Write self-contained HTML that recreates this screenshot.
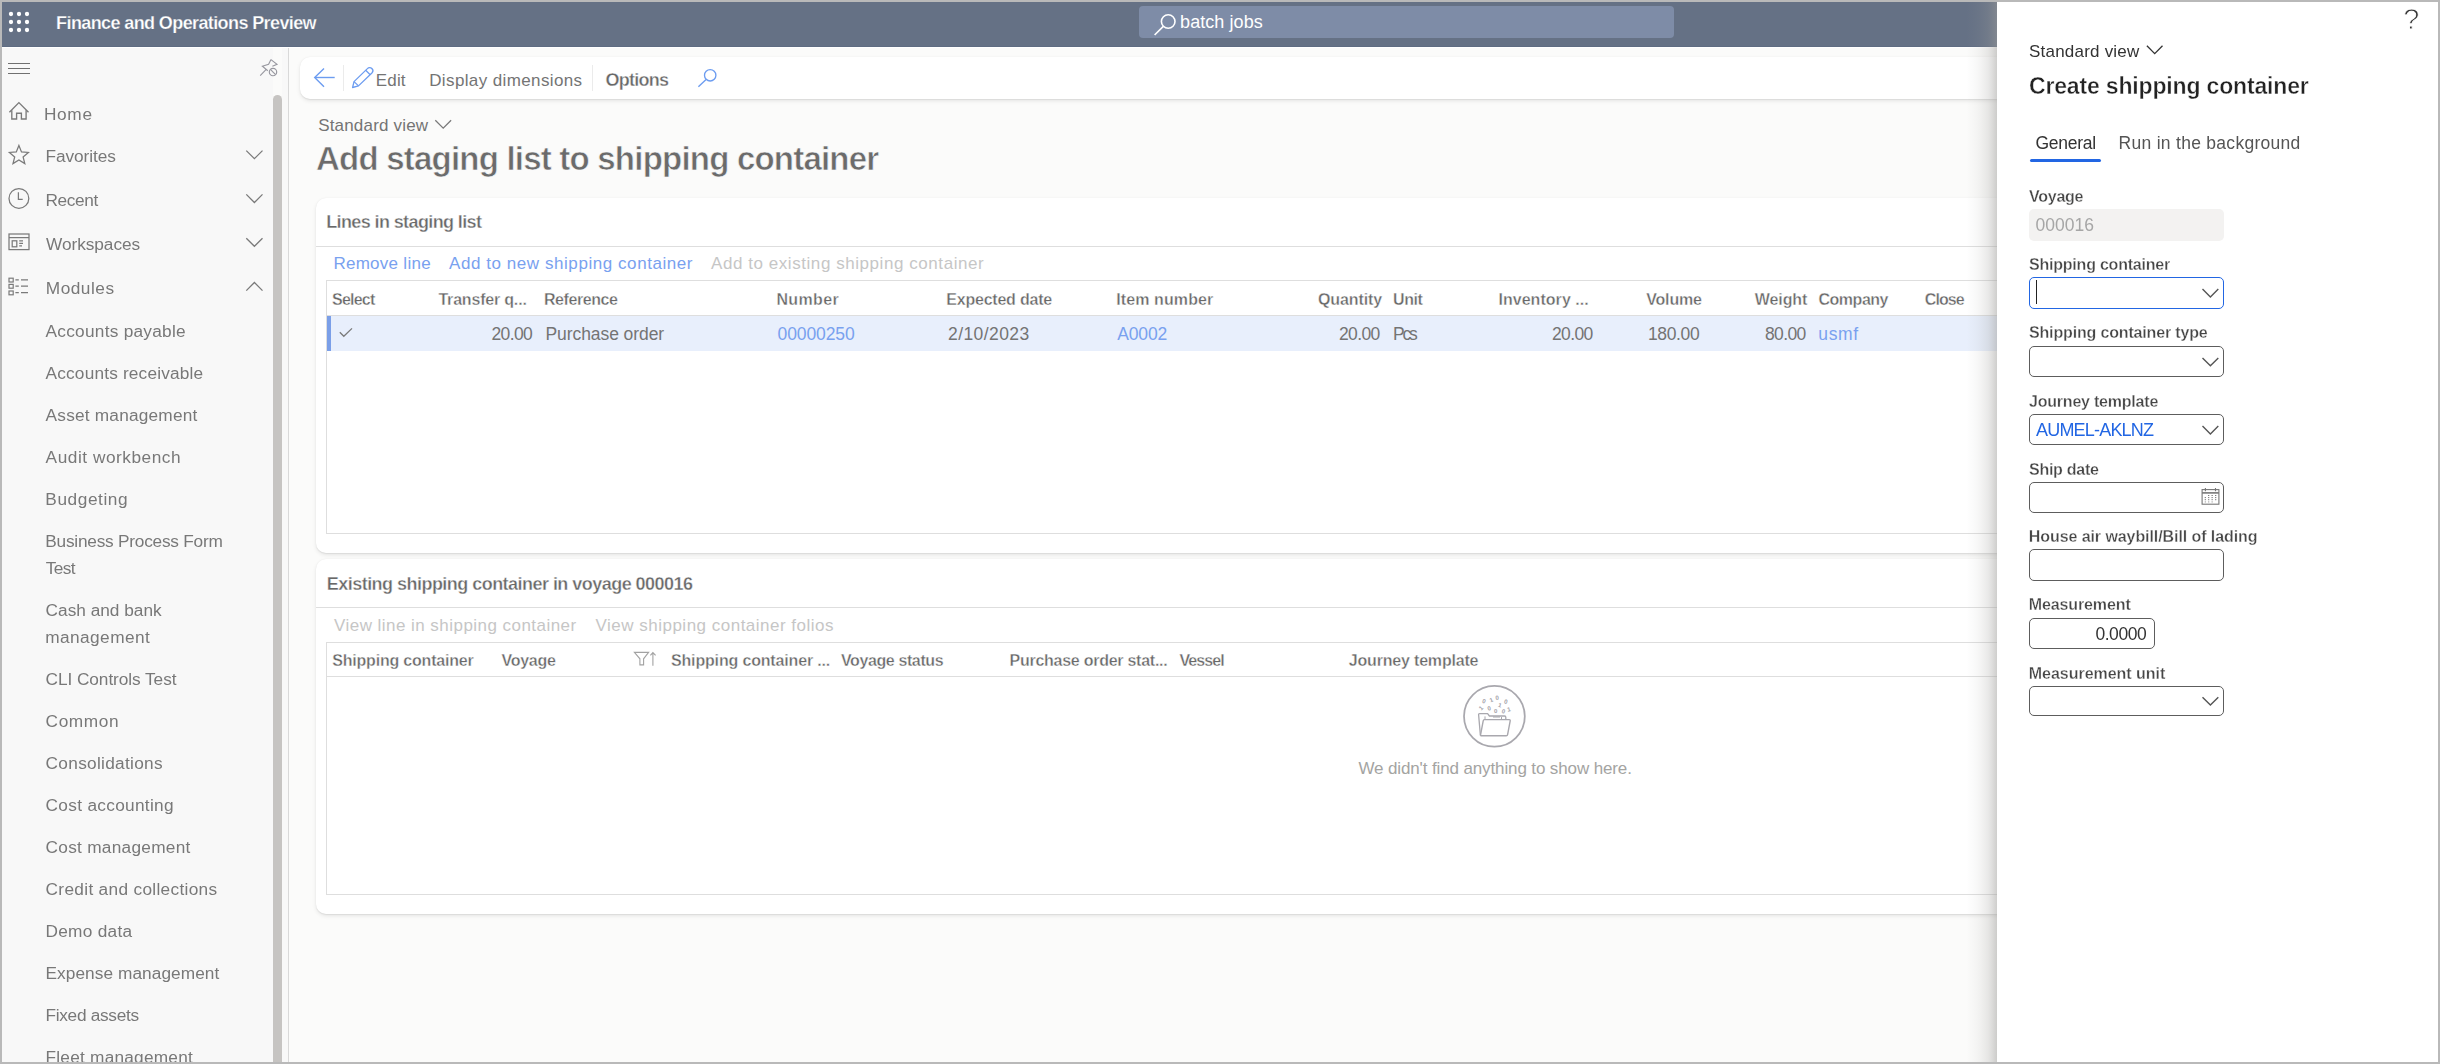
<!DOCTYPE html>
<html lang="en">
<head>
<meta charset="utf-8">
<title>Add staging list to shipping container</title>
<style>
*{box-sizing:border-box;margin:0;padding:0}
html,body{width:2440px;height:1064px;overflow:hidden;background:#b9b9b9;font-family:"Liberation Sans",sans-serif}
#app{position:absolute;left:2px;top:2px;width:2436px;height:1060px;overflow:hidden;background:#fbfbfa}
.abs{position:absolute}
.t{position:absolute;white-space:pre;line-height:1;display:block}
.layer{position:absolute;left:0;top:0;width:2440px;height:1064px;display:block}
.gl{will-change:transform}
#root{position:absolute;left:0;top:0;width:2440px;height:1064px}
/* header */
#hdr{left:2px;top:2px;width:2436px;height:45px;background:#657185}
#hdr2{left:2px;top:46px;width:2436px;height:1px;background:#5f6c82}
#hdr3{left:2px;top:47px;width:2436px;height:1px;background:#fff}
#srch{left:1139px;top:6px;width:535px;height:32px;background:#7e8ca7;border-radius:4px}
/* sidebar */
#side{left:2px;top:47px;width:271px;height:1015px;background:#f8f8f8}
#sbar{left:273px;top:95px;width:9px;height:980px;background:#c6c4c2;border-radius:5px 5px 0 0}
#sgap{left:282px;top:47px;width:6px;height:1015px;background:#f8f8f8}
#sline{left:288px;top:47px;width:1px;height:1015px;background:#d9d9d9}
/* main */
.card{background:#fff;border-radius:10px;box-shadow:0 2px 4.5px rgba(0,0,0,.085),0 .4px 1.2px rgba(0,0,0,.07)}
#abar{left:300px;top:57px;width:2200px;height:42px}
#card1{left:316px;top:198px;width:2200px;height:355px}
#card2{left:316px;top:559px;width:2200px;height:355px}
.hl{background:#dedede;height:1px}
.grid{border:1px solid #dedede;background:#fff}
#g1{left:326px;top:280px;width:2200px;height:254px}
#g2{left:326px;top:642px;width:2200px;height:253px}
#row{left:327px;top:316px;width:2200px;height:35px;background:#e8effc}
#rowbar{left:327px;top:316px;width:4px;height:35px;background:#7b9fe8}
/* dialog */
#dshadow{left:1967px;top:2px;width:30px;height:1060px;background:linear-gradient(to right,rgba(158,157,154,0) 0%,rgba(158,157,154,0.02) 7%,rgba(158,157,154,0.045) 20%,rgba(158,157,154,0.075) 33%,rgba(158,157,154,0.115) 45%,rgba(158,157,154,0.165) 57%,rgba(158,157,154,0.225) 70%,rgba(158,157,154,0.32) 82%,rgba(158,157,154,0.44) 94%,rgba(158,157,154,0.5) 100%)}
#dlg{left:1997px;top:2px;width:441px;height:1060px;background:#fff}
.inp{left:2029px;width:195px;height:32px;border:1px solid #5d5d5d;border-radius:5px;background:#fff}
#tabul{left:2030px;top:158.5px;width:71px;height:3px;background:#2266e3;border-radius:1.5px}
</style>
</head>
<body>
<div id="root">
<div id="app" class="abs" style="left:2px;top:2px"></div>
<div id="hdr" class="abs"></div><div id="hdr2" class="abs"></div>
<div id="srch" class="abs"></div>
<div id="side" class="abs"></div>
<div id="sbar" class="abs"></div>
<div id="sgap" class="abs"></div>
<div id="sline" class="abs"></div>
<div id="hdr3" class="abs"></div>

<div id="abar" class="abs card"></div>
<div class="abs" style="left:343px;top:65px;width:1px;height:26px;background:#ebebeb"></div>
<div class="abs" style="left:592px;top:65px;width:1px;height:26px;background:#ebebeb"></div>

<div id="card1" class="abs card"></div>
<div class="abs hl" style="left:316px;top:246px;width:2200px"></div>
<div id="g1" class="abs grid"></div>
<div class="abs hl" style="left:327px;top:315px;width:2200px"></div>
<div id="row" class="abs"></div><div id="rowbar" class="abs"></div>

<div id="card2" class="abs card"></div>
<div class="abs hl" style="left:316px;top:607px;width:2200px"></div>
<div id="g2" class="abs grid"></div>
<div class="abs hl" style="left:327px;top:676px;width:2200px"></div>

<div id="dshadow" class="abs"></div>
<div id="dlg" class="abs"></div>
<div id="tabul" class="abs"></div>
<div class="abs" style="left:2029px;top:209px;width:195px;height:32px;background:#f3f2f1;border-radius:5px"></div>
<div class="abs inp" style="top:277px;border:1.5px solid #2266e3"></div>
<div class="abs" style="left:2036px;top:280px;width:1px;height:24px;background:#222"></div>
<div class="abs inp" style="top:346px;height:31px"></div>
<div class="abs inp" style="top:414px;height:31px"></div>
<div class="abs inp" style="top:482px;height:31px"></div>
<div class="abs inp" style="top:549px"></div>
<div class="abs inp" style="top:618px;width:126px;height:31px"></div>
<div class="abs inp" style="top:686px;height:30px"></div>

<svg class="abs" style="left:0;top:0" width="2440" height="1064" viewBox="0 0 2440 1064" fill="none" stroke-linecap="butt" stroke-linejoin="miter">
<!-- waffle -->
<g fill="#fff" stroke="none">
<circle cx="11" cy="14" r="2.15"/><circle cx="19" cy="14" r="2.15"/><circle cx="27" cy="14" r="2.15"/>
<circle cx="11" cy="22" r="2.15"/><circle cx="19" cy="22" r="2.15"/><circle cx="27" cy="22" r="2.15"/>
<circle cx="11" cy="30" r="2.15"/><circle cx="19" cy="30" r="2.15"/><circle cx="27" cy="30" r="2.15"/>
</g>
<!-- header search icon -->
<g stroke="#fff" stroke-width="1.6"><circle cx="1168.2" cy="21.5" r="6.8"/><path d="M1163.3 26.4 L1154.6 35"/></g>
<!-- hamburger -->
<g stroke="#707070" stroke-width="1.2"><path d="M8 63.5H30M8 68.5H30M8 73.5H30"/></g>
<!-- pin -->
<g stroke="#9898a0" stroke-width="1.15"><path d="M271 59.6 L277 64.4 L272.4 66.3 M271 59.6 L268.6 64.2 L262.4 66.2 L267.8 70.8 M266.2 69.4 L260.2 75.6"/><circle cx="273" cy="72" r="3.7"/><path d="M270.4 69.4 L275.6 74.6"/></g>
<!-- home -->
<g stroke="#7a7a7a" stroke-width="1.35"><path d="M9.4 112.2 L18.9 102.6 L28.5 112.2"/><path d="M11.8 110.2 V119 H16.6 V113.2 H21.4 V119 H26.1 V110.2"/></g>
<!-- star -->
<path stroke="#7a7a7a" stroke-width="1.25" d="M18.9 145.5 L21.5 151.9 L28.4 152.4 L23.1 156.9 L24.8 163.6 L18.9 159.9 L13.0 163.6 L14.7 156.9 L9.4 152.4 L16.3 151.9 Z"/>
<!-- clock -->
<g stroke="#7a7a7a" stroke-width="1.25"><circle cx="18.9" cy="198.4" r="9.9"/><path d="M18.4 192.2 V199.4 H22.7"/></g>
<!-- workspaces -->
<g stroke="#7a7a7a" stroke-width="1.25"><rect x="9" y="234" width="20" height="15.6"/><path d="M9 237.6H29"/><rect x="12.2" y="240.8" width="4.6" height="6"/><path d="M19.2 240.8H23M19.2 243.3H23M19.2 245.8H22"/></g>
<!-- modules -->
<g stroke="#7a7a7a" stroke-width="1.2"><rect x="9" y="278.2" width="4.2" height="3.8"/><rect x="9" y="284.4" width="4.2" height="3.8"/><rect x="9" y="291" width="4.2" height="3.8"/>
<path d="M15.4 279.8H18.8M21 279.8H28M15.4 286.2H18.8M21 286.2H28M15.4 292.7H18.8M21 292.7H28"/></g>
<!-- sidebar chevrons -->
<g stroke="#7a7a7a" stroke-width="1.3"><path d="M246.3 150.6 L254.4 158.7 L262.5 150.6"/><path d="M246.3 194.4 L254.4 202.5 L262.5 194.4"/><path d="M246.3 238.2 L254.4 246.3 L262.5 238.2"/><path d="M246.3 290.6 L254.4 282.5 L262.5 290.6"/></g>
<!-- back arrow -->
<g stroke="#6c9cf0" stroke-width="1.4"><path d="M334.7 77.5 H315"/><path d="M324 68.4 L314.7 77.5 L324 86.7"/></g>
<!-- pencil -->
<g stroke="#6c9cf0" stroke-width="1.3" stroke-linejoin="round"><path d="M352.6 87.5 L354 81.6 L367.4 68.6 A3.1 3.1 0 0 1 371.9 73 L358.5 85.9 Z"/><path d="M354 81.6 L358.5 85.9"/><path d="M365.7 70.3 L370.2 74.7"/></g>
<!-- action search -->
<g stroke="#6c9cf0" stroke-width="1.35"><circle cx="710.2" cy="75.3" r="5.7"/><path d="M706.1 79.4 L698.4 86.8"/></g>
<!-- standard view chevron (main) -->
<path stroke="#7a7a7a" stroke-width="1.3" d="M435.3 120.3 L443.2 128.2 L451.1 120.3"/>
<!-- row check -->
<path stroke="#7a7a7a" stroke-width="1.3" d="M339.8 332.3 L343.8 336.3 L352 328.4"/>
<!-- filter + sort arrow -->
<g stroke="#a2a2a2" stroke-width="1.1"><path d="M634.4 652.4 H648.6 L643.6 658.8 V664.9 H639.9 V658.8 Z"/><path d="M652.9 652.4 V665.8 M650.4 655.4 L652.9 652.6 L655.6 655.4"/></g>
<!-- empty state -->
<g stroke="#a9a8ae" stroke-width="1.5" stroke-linejoin="round"><circle cx="1494.4" cy="716.3" r="30.4" stroke-width="1.75"/>
<path stroke-width="1.3" d="M1480.4 735.4 L1478.6 714.6 Q1478.5 713.6 1479.6 713.6 H1487.6 L1489.4 716 H1504.6 Q1505.8 716 1505.8 717.2 V719.4"/>
<path stroke-width="1.4" d="M1484.4 719.6 H1509.2 Q1510.4 719.6 1510.2 720.8 L1507.6 734.6 Q1507.4 735.8 1506.2 735.8 H1481.6 Q1480.4 735.8 1480.6 734.6 L1483.2 720.8 Q1483.4 719.6 1484.4 719.6 Z"/>
<path stroke-width="1" d="M1485 716.4 V719 M1493 717 H1500 M1501.5 717 V719"/></g>
<g fill="#a2a1a8" stroke="none" font-family="'Liberation Sans',sans-serif" font-size="6" font-weight="bold">
<text x="1482.3" y="703.2" transform="rotate(20 1483.7 701.2)">0</text>
<text x="1489.6" y="702" transform="rotate(-22 1491 700)">1</text>
<text x="1495.6" y="699.8" transform="rotate(-8 1497 698)">0</text>
<text x="1504.2" y="703.6" transform="rotate(14 1505.6 701.6)">0</text>
<text x="1479.4" y="710.4" transform="rotate(-45 1480.8 708.4)">1</text>
<text x="1487.6" y="710.6" transform="rotate(-14 1489 708.6)">0</text>
<text x="1498.2" y="707.2" transform="rotate(16 1499.6 705.2)">1</text>
<text x="1494" y="713.4" transform="rotate(0 1495.4 711.4)">0</text>
<text x="1501.8" y="713.4" transform="rotate(18 1503.2 711.4)">0</text>
<text x="1507.2" y="711.4" transform="rotate(-14 1508.6 709.4)">1</text>
</g>
<!-- dialog: standard view chevron -->
<path stroke="#333" stroke-width="1.3" d="M2146.9 45.7 L2154.7 53.6 L2162.5 45.7"/>
<!-- dialog dropdown chevrons -->
<g stroke="#555" stroke-width="1.4"><path d="M2202.5 289 L2210.4 296.9 L2218.3 289"/><path d="M2202.5 357.9 L2210.4 365.8 L2218.3 357.9"/><path d="M2202.5 426 L2210.4 433.9 L2218.3 426"/><path d="M2202.5 697.2 L2210.4 705.1 L2218.3 697.2"/></g>
<!-- calendar -->
<g stroke="#777" stroke-width="1.1"><rect x="2202.1" y="489.6" width="16.8" height="14.6"/><path stroke-width="1.6" d="M2202.1 492.9 H2218.9"/><path d="M2205.4 488.1 V491.2 M2215.5 488.1 V491.2"/></g>
<g fill="#7d7d7d" stroke="none">
<rect x="2208" y="495" width="1.3" height="1"/><rect x="2211.5" y="495" width="1.3" height="1"/><rect x="2215" y="495" width="1.3" height="1"/>
<rect x="2204.7" y="497.1" width="1.3" height="1"/><rect x="2208" y="497.1" width="1.3" height="1"/><rect x="2211.5" y="497.1" width="1.3" height="1"/><rect x="2215" y="497.1" width="1.3" height="1"/>
<rect x="2204.7" y="499.2" width="1.3" height="1"/><rect x="2208" y="499.2" width="1.3" height="1"/><rect x="2211.5" y="499.2" width="1.3" height="1"/><rect x="2215" y="499.2" width="1.3" height="1"/>
<rect x="2204.7" y="501.3" width="1.3" height="1.2" fill="#b0b0b0"/><rect x="2208" y="501.3" width="1.3" height="1.2" fill="#b0b0b0"/><rect x="2211.5" y="501.3" width="1.3" height="1.2" fill="#b0b0b0"/>
</g>
</svg>

<header class="layer">
<span class="t" style="left:56.10px;top:14.00px;font-size:18px;color:#ffffff;letter-spacing:-0.606px;font-weight:bold;-webkit-text-stroke:0.25px #657185;">Finance and Operations Preview</span>
<span class="t" style="left:1180.10px;top:13.00px;font-size:18px;color:#ffffff;letter-spacing:0.061px;">batch jobs</span>
</header>
<main class="layer">
<span class="t" style="left:375.80px;top:72.00px;font-size:17px;color:#747474;letter-spacing:0.143px;">Edit</span>
<span class="t" style="left:429.20px;top:72.00px;font-size:17px;color:#747474;letter-spacing:0.379px;">Display dimensions</span>
<span class="t" style="left:605.40px;top:71.00px;font-size:18px;color:#686868;letter-spacing:-0.714px;font-weight:bold;-webkit-text-stroke:0.35px #ffffff;">Options</span>
<span class="t" style="left:318.20px;top:117.00px;font-size:17px;color:#747474;letter-spacing:0.179px;">Standard view</span>
<span class="t" style="left:316.00px;top:142.00px;font-size:33px;color:#6b6b6b;letter-spacing:-0.784px;font-weight:bold;-webkit-text-stroke:0.6px #fafafa;">Add staging list to shipping container</span>
<span class="t" style="left:326.20px;top:213.00px;font-size:18px;color:#686868;letter-spacing:-0.611px;font-weight:bold;-webkit-text-stroke:0.35px #ffffff;">Lines in staging list</span>
<span class="t" style="left:333.40px;top:255.00px;font-size:17px;color:#79a1ef;letter-spacing:0.277px;">Remove line</span>
<span class="t" style="left:449.00px;top:255.00px;font-size:17px;color:#79a1ef;letter-spacing:0.561px;">Add to new shipping container</span>
<span class="t" style="left:711.00px;top:255.00px;font-size:17px;color:#c6c6c6;letter-spacing:0.559px;">Add to existing shipping container</span>
<span class="t" style="left:332.00px;top:292.00px;font-size:16px;color:#686868;letter-spacing:-0.762px;font-weight:bold;-webkit-text-stroke:0.35px #ffffff;">Select</span>
<span class="t" style="left:438.40px;top:292.00px;font-size:16px;color:#686868;letter-spacing:-0.188px;font-weight:bold;-webkit-text-stroke:0.35px #ffffff;">Transfer q...</span>
<span class="t" style="left:544.00px;top:292.00px;font-size:16px;color:#686868;letter-spacing:-0.435px;font-weight:bold;-webkit-text-stroke:0.35px #ffffff;">Reference</span>
<span class="t" style="left:776.40px;top:292.00px;font-size:16px;color:#686868;letter-spacing:0.375px;font-weight:bold;-webkit-text-stroke:0.35px #ffffff;">Number</span>
<span class="t" style="left:946.25px;top:292.00px;font-size:16px;color:#686868;letter-spacing:-0.215px;font-weight:bold;-webkit-text-stroke:0.35px #ffffff;">Expected date</span>
<span class="t" style="left:1116.25px;top:292.00px;font-size:16px;color:#686868;letter-spacing:0.096px;font-weight:bold;-webkit-text-stroke:0.35px #ffffff;">Item number</span>
<span class="t" style="left:1318.00px;top:292.00px;font-size:16px;color:#686868;letter-spacing:-0.106px;font-weight:bold;-webkit-text-stroke:0.35px #ffffff;">Quantity</span>
<span class="t" style="left:1393.00px;top:292.00px;font-size:16px;color:#686868;letter-spacing:-0.424px;font-weight:bold;-webkit-text-stroke:0.35px #ffffff;">Unit</span>
<span class="t" style="left:1498.40px;top:292.00px;font-size:16px;color:#686868;letter-spacing:0.046px;font-weight:bold;-webkit-text-stroke:0.35px #ffffff;">Inventory ...</span>
<span class="t" style="left:1646.20px;top:292.00px;font-size:16px;color:#686868;letter-spacing:-0.161px;font-weight:bold;-webkit-text-stroke:0.35px #ffffff;">Volume</span>
<span class="t" style="left:1754.80px;top:292.00px;font-size:16px;color:#686868;letter-spacing:-0.101px;font-weight:bold;-webkit-text-stroke:0.35px #ffffff;">Weight</span>
<span class="t" style="left:1818.50px;top:292.00px;font-size:16px;color:#686868;letter-spacing:-0.483px;font-weight:bold;-webkit-text-stroke:0.35px #ffffff;">Company</span>
<span class="t" style="left:1924.80px;top:292.00px;font-size:16px;color:#686868;letter-spacing:-0.918px;font-weight:bold;-webkit-text-stroke:0.35px #ffffff;">Close</span>
<span class="t" style="left:491.50px;top:326.00px;font-size:17.5px;color:#747474;letter-spacing:-0.640px;">20.00</span>
<span class="t" style="left:545.50px;top:326.00px;font-size:17.5px;color:#747474;letter-spacing:-0.078px;">Purchase order</span>
<span class="t" style="left:777.50px;top:326.00px;font-size:17.5px;color:#79a1ef;letter-spacing:-0.090px;">00000250</span>
<span class="t" style="left:948.00px;top:326.00px;font-size:17.5px;color:#747474;letter-spacing:0.422px;">2/10/2023</span>
<span class="t" style="left:1117.25px;top:326.00px;font-size:17.5px;color:#79a1ef;letter-spacing:-0.155px;">A0002</span>
<span class="t" style="left:1339.00px;top:326.00px;font-size:17.5px;color:#747474;letter-spacing:-0.640px;">20.00</span>
<span class="t" style="left:1393.00px;top:326.00px;font-size:17.5px;color:#747474;letter-spacing:-2.211px;">Pcs</span>
<span class="t" style="left:1552.00px;top:326.00px;font-size:17.5px;color:#747474;letter-spacing:-0.640px;">20.00</span>
<span class="t" style="left:1648.00px;top:326.00px;font-size:17.5px;color:#747474;letter-spacing:-0.359px;">180.00</span>
<span class="t" style="left:1765.00px;top:326.00px;font-size:17.5px;color:#747474;letter-spacing:-0.640px;">80.00</span>
<span class="t" style="left:1818.30px;top:326.00px;font-size:17.5px;color:#79a1ef;letter-spacing:0.613px;">usmf</span>
<span class="t" style="left:326.80px;top:575.00px;font-size:18px;color:#686868;letter-spacing:-0.533px;font-weight:bold;-webkit-text-stroke:0.35px #ffffff;">Existing shipping container in voyage 000016</span>
<span class="t" style="left:334.00px;top:617.00px;font-size:17px;color:#c6c6c6;letter-spacing:0.459px;">View line in shipping container</span>
<span class="t" style="left:595.50px;top:617.00px;font-size:17px;color:#c6c6c6;letter-spacing:0.495px;">View shipping container folios</span>
<span class="t" style="left:332.20px;top:653.00px;font-size:16px;color:#686868;letter-spacing:-0.198px;font-weight:bold;-webkit-text-stroke:0.35px #ffffff;">Shipping container</span>
<span class="t" style="left:501.50px;top:653.00px;font-size:16px;color:#686868;letter-spacing:-0.266px;font-weight:bold;-webkit-text-stroke:0.35px #ffffff;">Voyage</span>
<span class="t" style="left:671.00px;top:653.00px;font-size:16px;color:#686868;letter-spacing:-0.163px;font-weight:bold;-webkit-text-stroke:0.35px #ffffff;">Shipping container ...</span>
<span class="t" style="left:841.00px;top:653.00px;font-size:16px;color:#686868;letter-spacing:-0.392px;font-weight:bold;-webkit-text-stroke:0.35px #ffffff;">Voyage status</span>
<span class="t" style="left:1009.50px;top:653.00px;font-size:16px;color:#686868;letter-spacing:-0.258px;font-weight:bold;-webkit-text-stroke:0.35px #ffffff;">Purchase order stat...</span>
<span class="t" style="left:1179.40px;top:653.00px;font-size:16px;color:#686868;letter-spacing:-0.917px;font-weight:bold;-webkit-text-stroke:0.35px #ffffff;">Vessel</span>
<span class="t" style="left:1348.80px;top:653.00px;font-size:16px;color:#686868;letter-spacing:-0.186px;font-weight:bold;-webkit-text-stroke:0.35px #ffffff;">Journey template</span>
<span class="t" style="left:1358.40px;top:760.00px;font-size:17px;color:#a4a4a2;letter-spacing:-0.123px;">We didn&#x27;t find anything to show here.</span>
</main>
<nav class="layer gl">
<span class="t" style="left:44.00px;top:106.00px;font-size:17.25px;color:#787878;letter-spacing:0.660px;">Home</span>
<span class="t" style="left:45.50px;top:148.00px;font-size:17.25px;color:#787878;letter-spacing:-0.077px;">Favorites</span>
<span class="t" style="left:45.50px;top:192.00px;font-size:17.25px;color:#787878;letter-spacing:-0.353px;">Recent</span>
<span class="t" style="left:46.00px;top:236.00px;font-size:17.25px;color:#787878;letter-spacing:-0.052px;">Workspaces</span>
<span class="t" style="left:45.80px;top:280.00px;font-size:17.25px;color:#787878;letter-spacing:0.504px;">Modules</span>
<span class="t" style="left:45.60px;top:323.00px;font-size:17.25px;color:#787878;letter-spacing:0.255px;">Accounts payable</span>
<span class="t" style="left:45.60px;top:365.00px;font-size:17.25px;color:#787878;letter-spacing:0.173px;">Accounts receivable</span>
<span class="t" style="left:45.60px;top:407.00px;font-size:17.25px;color:#787878;letter-spacing:0.205px;">Asset management</span>
<span class="t" style="left:45.60px;top:449.00px;font-size:17.25px;color:#787878;letter-spacing:0.533px;">Audit workbench</span>
<span class="t" style="left:45.30px;top:491.00px;font-size:17.25px;color:#787878;letter-spacing:0.575px;">Budgeting</span>
<span class="t" style="left:45.30px;top:533.00px;font-size:17.25px;color:#787878;letter-spacing:-0.228px;">Business Process Form</span>
<span class="t" style="left:45.80px;top:560.00px;font-size:17.25px;color:#787878;letter-spacing:-0.631px;">Test</span>
<span class="t" style="left:45.60px;top:602.00px;font-size:17.25px;color:#787878;">Cash and bank</span>
<span class="t" style="left:45.20px;top:629.00px;font-size:17.25px;color:#787878;letter-spacing:0.434px;">management</span>
<span class="t" style="left:45.60px;top:671.00px;font-size:17.25px;color:#787878;letter-spacing:-0.069px;">CLI Controls Test</span>
<span class="t" style="left:45.60px;top:713.00px;font-size:17.25px;color:#787878;letter-spacing:0.603px;">Common</span>
<span class="t" style="left:45.60px;top:755.00px;font-size:17.25px;color:#787878;letter-spacing:0.298px;">Consolidations</span>
<span class="t" style="left:45.60px;top:797.00px;font-size:17.25px;color:#787878;letter-spacing:0.307px;">Cost accounting</span>
<span class="t" style="left:45.60px;top:839.00px;font-size:17.25px;color:#787878;letter-spacing:0.267px;">Cost management</span>
<span class="t" style="left:45.60px;top:881.00px;font-size:17.25px;color:#787878;letter-spacing:0.315px;">Credit and collections</span>
<span class="t" style="left:45.50px;top:923.00px;font-size:17.25px;color:#787878;letter-spacing:0.277px;">Demo data</span>
<span class="t" style="left:45.50px;top:965.00px;font-size:17.25px;color:#787878;letter-spacing:0.070px;">Expense management</span>
<span class="t" style="left:45.50px;top:1007.00px;font-size:17.25px;color:#787878;letter-spacing:-0.291px;">Fixed assets</span>
<span class="t" style="left:45.50px;top:1049.00px;font-size:17.25px;color:#787878;letter-spacing:0.231px;">Fleet management</span>
</nav>
<aside class="layer gl">
<span class="t" style="left:2403.30px;top:5.00px;font-size:29px;color:#333333;-webkit-text-stroke:0.9px #ffffff;">?</span>
<span class="t" style="left:2029.00px;top:43.00px;font-size:17px;color:#333333;letter-spacing:0.212px;">Standard view</span>
<span class="t" style="left:2029.00px;top:75.00px;font-size:23px;color:#222222;letter-spacing:-0.165px;font-weight:bold;-webkit-text-stroke:0.4px #ffffff;">Create shipping container</span>
<span class="t" style="left:2035.40px;top:135.00px;font-size:17.5px;color:#333333;letter-spacing:-0.262px;">General</span>
<span class="t" style="left:2118.60px;top:135.00px;font-size:17.5px;color:#555555;letter-spacing:0.282px;">Run in the background</span>
<span class="t" style="left:2029.00px;top:189.00px;font-size:16px;color:#464646;letter-spacing:-0.246px;font-weight:bold;-webkit-text-stroke:0.3px #ffffff;">Voyage</span>
<span class="t" style="left:2035.60px;top:217.00px;font-size:17.5px;color:#a6a6a6;letter-spacing:-0.013px;">000016</span>
<span class="t" style="left:2029.00px;top:257.00px;font-size:16px;color:#464646;letter-spacing:-0.216px;font-weight:bold;-webkit-text-stroke:0.3px #ffffff;">Shipping container</span>
<span class="t" style="left:2029.00px;top:325.00px;font-size:16px;color:#464646;letter-spacing:-0.161px;font-weight:bold;-webkit-text-stroke:0.3px #ffffff;">Shipping container type</span>
<span class="t" style="left:2029.00px;top:394.00px;font-size:16px;color:#464646;letter-spacing:-0.212px;font-weight:bold;-webkit-text-stroke:0.3px #ffffff;">Journey template</span>
<span class="t" style="left:2036.00px;top:421.00px;font-size:18px;color:#2266e3;letter-spacing:-0.803px;">AUMEL-AKLNZ</span>
<span class="t" style="left:2029.00px;top:462.00px;font-size:16px;color:#464646;letter-spacing:-0.264px;font-weight:bold;-webkit-text-stroke:0.3px #ffffff;">Ship date</span>
<span class="t" style="left:2028.80px;top:529.00px;font-size:16px;color:#464646;letter-spacing:-0.077px;font-weight:bold;-webkit-text-stroke:0.3px #ffffff;">House air waybill/Bill of lading</span>
<span class="t" style="left:2028.80px;top:597.00px;font-size:16px;color:#464646;letter-spacing:-0.122px;font-weight:bold;-webkit-text-stroke:0.3px #ffffff;">Measurement</span>
<span class="t" style="left:2095.40px;top:626.00px;font-size:17.5px;color:#333333;letter-spacing:-0.439px;">0.0000</span>
<span class="t" style="left:2028.80px;top:666.00px;font-size:16px;color:#464646;letter-spacing:-0.026px;font-weight:bold;-webkit-text-stroke:0.3px #ffffff;">Measurement unit</span>
</aside>

<!-- frame -->
<div class="abs" style="left:0;top:0;width:2440px;height:2px;background:#b9b9b9"></div>
<div class="abs" style="left:0;top:1062px;width:2440px;height:2px;background:#b9b9b9"></div>
<div class="abs" style="left:0;top:0;width:2px;height:1064px;background:#b9b9b9"></div>
<div class="abs" style="left:2438px;top:0;width:2px;height:1064px;background:#b9b9b9"></div>
</div>
</body>
</html>
